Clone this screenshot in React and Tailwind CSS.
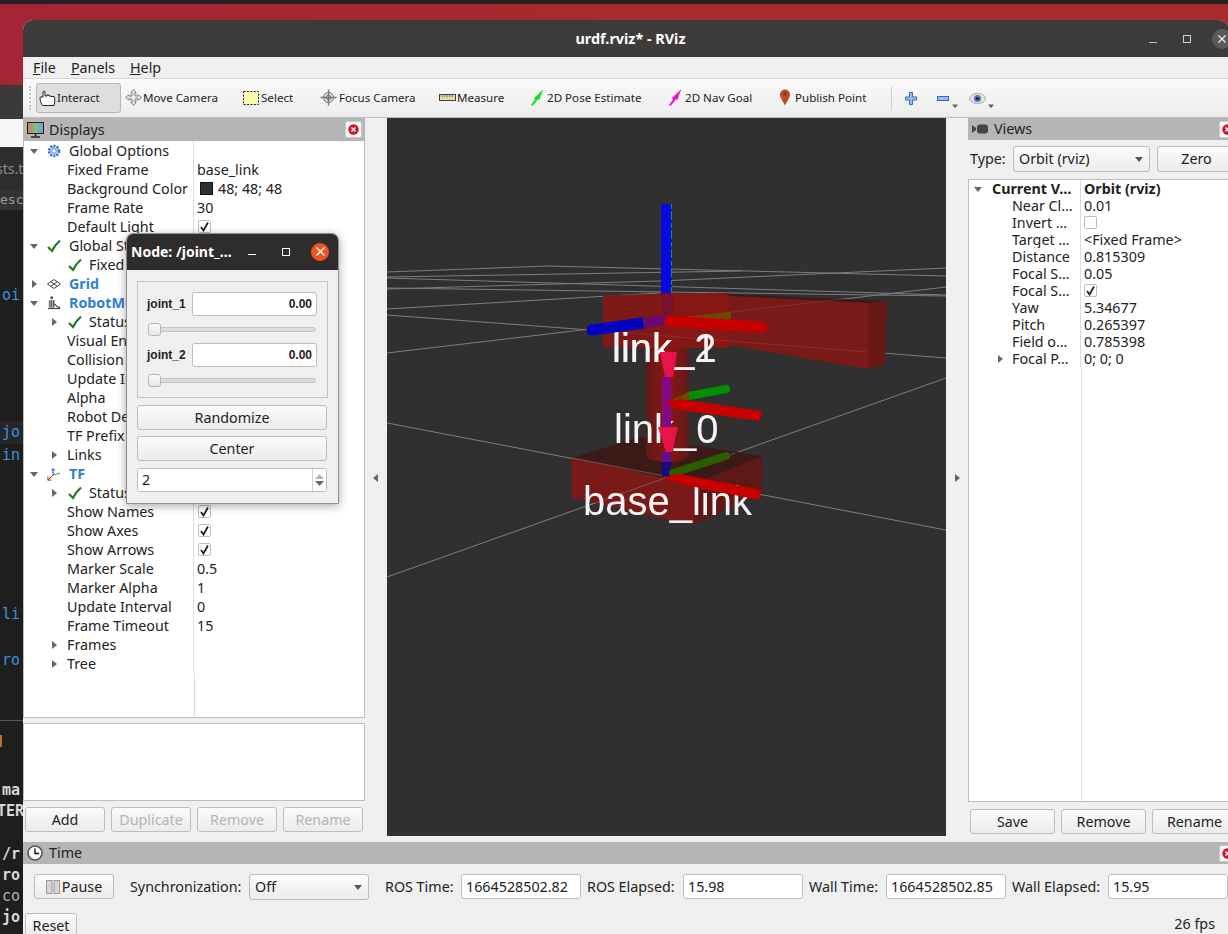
import React from "react";

const Tri = ({ dir = "down", className = "", color = "#666" }) => (
  <svg width="10" height="10" viewBox="0 0 10 10" className={className}>
    {dir === "down" ? <polygon points="1,3 9,3 5,8" fill={color} /> : <polygon points="3,1 8,5 3,9" fill={color} />}
  </svg>
);

const Check = () => (
  <svg width="14" height="14" viewBox="0 0 14 14">
    <path d="M1 8 L5 12 C7 8 9.5 4.5 13 1.5" fill="none" stroke="#1f7a22" strokeWidth="2.2" />
  </svg>
);

const CheckBox = ({ checked = true }) => (
  <div className="w-[13px] h-[13px] border border-[#bdbdbd] rounded-[2px] bg-white flex items-center justify-center">
    {checked && (
      <svg width="11" height="11" viewBox="0 0 11 11">
        <path d="M2 6 L4.5 9.5 L9 1.5" fill="none" stroke="#222" strokeWidth="1.8" />
      </svg>
    )}
  </div>
);

const CloseBtn = ({ className = "" }) => (
  <div className={`w-[17px] h-[17px] bg-[#f7f7f7] border border-[#c8c8c8] rounded-[2px] flex items-center justify-center shrink-0 ${className}`}>
    <svg width="11" height="11" viewBox="0 0 11 11">
      <circle cx="5.5" cy="5.5" r="5.2" fill="#c9182f" />
      <path d="M3.5 3.5 L7.5 7.5 M7.5 3.5 L3.5 7.5" stroke="#fff" strokeWidth="1.4" />
    </svg>
  </div>
);

const Btn = ({ children, className = "", disabled }) => (
  <div
    className={`h-[25px] shrink-0 border border-[#bdbdbd] rounded-[3px] bg-gradient-to-b from-[#fbfbfb] to-[#ebebeb] flex items-center justify-center ${disabled ? "text-[#b4b4b4]" : "text-[#222]"} ${className}`}
  >
    {children}
  </div>
);

const Field = ({ children, className = "" }) => (
  <div className={`h-[25px] shrink-0 border border-[#bdbdbd] rounded-[3px] bg-white flex items-center pl-[4px] text-[#222] ${className}`}>
    {children}
  </div>
);

const Combo = ({ children, className = "" }) => (
  <div className={`h-[26px] shrink-0 border border-[#bdbdbd] rounded-[3px] bg-gradient-to-b from-[#fbfbfb] to-[#ececec] flex items-center justify-between pl-[5px] pr-[5px] text-[#222] ${className}`}>
    {children}
    <Tri color="#555" />
  </div>
);

// small tree / toolbar icons
const GearIcon = () => (
  <svg width="14" height="14" viewBox="0 0 14 14">
    <circle cx="7" cy="7" r="5" fill="#c4d6f2" stroke="#3f74c9" strokeWidth="2.6" strokeDasharray="2 1.2" />
    <circle cx="7" cy="7" r="2.2" fill="#fff" stroke="#3f74c9" strokeWidth="0.8" />
  </svg>
);

const GridIcon = () => (
  <svg width="14" height="10" viewBox="0 0 14 10">
    <path d="M7 0.5 L13.5 5 L7 9.5 L0.5 5 Z M3.7 2.8 L10.3 7.2 M10.3 2.8 L3.7 7.2" fill="none" stroke="#333" strokeWidth="0.9" />
  </svg>
);

const RobotIcon = () => (
  <svg width="15" height="15" viewBox="0 0 15 15">
    <circle cx="5" cy="2.5" r="1.6" fill="#3b5a9a" />
    <rect x="2" y="5" width="6" height="8" fill="#555" />
    <path d="M3.5 5 V13 M6 5 V13" stroke="#ddd" strokeWidth="0.8" />
    <path d="M8 9 L11 12 L14 13" fill="none" stroke="#444" strokeWidth="1.2" />
    <path d="M1 14 H14" stroke="#222" strokeWidth="1" />
  </svg>
);

const TfIcon = () => (
  <svg width="16" height="16" viewBox="0 0 16 16">
    <path d="M7 9 L7 2 M5 4 L7 2 L9 4" fill="none" stroke="#2a2ac8" strokeWidth="1.1" />
    <path d="M7 9 L15 7" stroke="#1aa51a" strokeWidth="1.1" />
    <path d="M7 9 L1 15 M1 11 L1 15 L5 15" fill="none" stroke="#e01515" strokeWidth="1.1" />
  </svg>
);

const HandIcon = () => (
  <svg width="17" height="17" viewBox="0 0 17 17">
    <path d="M3 15 C1.5 12 0.8 9 1.2 7 H4 V2 C4 0.7 6 0.7 6 2 V6 H8 V5 H10 V6 H12 V6.5 H15 C16 8 16 12 15 15.5 H3.5 Z" fill="#fff" stroke="#222" strokeWidth="1" />
  </svg>
);

const MoveIcon = () => (
  <svg width="17" height="17" viewBox="0 0 17 17">
    <path d="M8.5 0.5 L11 3.5 H10 V7 H13.5 V6 L16.5 8.5 L13.5 11 V10 H10 V13.5 H11 L8.5 16.5 L6 13.5 H7 V10 H3.5 V11 L0.5 8.5 L3.5 6 V7 H7 V3.5 H6 Z" fill="#eee" stroke="#777" strokeWidth="0.9" />
    <path d="M5 5 H12 V12 H5 Z" fill="none" stroke="#aaa" strokeWidth="0.7" />
  </svg>
);

const SelectIcon = () => (
  <svg width="16" height="14" viewBox="0 0 16 14">
    <rect x="0.5" y="0.5" width="15" height="13" fill="#fdf6ad" stroke="#222" strokeWidth="1" strokeDasharray="2 1.4" />
  </svg>
);

const FocusIcon = () => (
  <svg width="17" height="17" viewBox="0 0 17 17">
    <circle cx="8.5" cy="8.5" r="5" fill="#ddd" stroke="#777" />
    <path d="M8.5 0.5 V16.5 M0.5 8.5 H16.5" stroke="#777" strokeWidth="1.4" />
    <circle cx="8.5" cy="8.5" r="2.2" fill="none" stroke="#777" />
  </svg>
);

const RulerIcon = () => (
  <svg width="17" height="8" viewBox="0 0 17 8">
    <rect x="0.5" y="0.5" width="16" height="6" fill="#e8dca0" stroke="#444" strokeWidth="1" />
    <path d="M3 1 V3 M5.5 1 V3 M8 1 V3.5 M10.5 1 V3 M13 1 V3" stroke="#444" strokeWidth="0.7" />
  </svg>
);

const ArrowIcon = ({ color }) => (
  <svg width="16" height="17" viewBox="0 0 16 20">
    <path d="M1 19 L6 12 L4.5 11 L15 1 L10.5 13 L9 12 L3 19.5 Z" fill={color} stroke={color} strokeWidth="0.4" />
  </svg>
);

const PinIcon = () => (
  <svg width="12" height="17" viewBox="0 0 12 17">
    <path d="M6 16.5 C4 12 1 9 1 5.5 A5 5 0 0 1 11 5.5 C11 9 8 12 6 16.5 Z" fill="#bd4b24" />
    <circle cx="6" cy="5" r="1.8" fill="#6e3a24" />
  </svg>
);

const PlusIcon = () => (
  <svg width="12" height="13" viewBox="0 0 12 13">
    <path d="M4.5 0.5 H7.5 V5 H11.5 V8 H7.5 V12.5 H4.5 V8 H0.5 V5 H4.5 Z" fill="#9cbce8" stroke="#3569b5" />
  </svg>
);

const MinusIcon = () => (
  <svg width="12" height="5" viewBox="0 0 12 5">
    <rect x="0.5" y="0.5" width="11" height="4" fill="#9cbce8" stroke="#3569b5" />
  </svg>
);

const EyeIcon = () => (
  <svg width="17" height="13" viewBox="0 0 17 13">
    <ellipse cx="8.5" cy="6.5" rx="8" ry="5" fill="#e4e4e8" stroke="#aaa" />
    <circle cx="8.5" cy="6.5" r="3.6" fill="#5f78b8" />
    <circle cx="8.5" cy="6.5" r="1.6" fill="#1d2540" />
  </svg>
);

const MonitorIcon = () => (
  <svg width="17" height="16" viewBox="0 0 17 16">
    <defs>
      <linearGradient id="screenGrad" x1="0" x2="1" y1="0" y2="0">
        <stop offset="0" stopColor="#d9706f" />
        <stop offset="0.5" stopColor="#7fc27f" />
        <stop offset="1" stopColor="#8b8fe6" />
      </linearGradient>
    </defs>
    <rect x="0.5" y="0.5" width="16" height="11" fill="url(#screenGrad)" stroke="#222" />
    <path d="M8.5 12 V14 M4 15 H13" stroke="#222" strokeWidth="1.6" />
  </svg>
);

const CameraIcon = () => (
  <svg width="16" height="10" viewBox="0 0 16 10">
    <polygon points="0,1 4,4 4,6 0,9" fill="#444" />
    <rect x="5" y="0.5" width="11" height="9" rx="3" fill="#444" />
  </svg>
);

const ClockIcon = () => (
  <svg width="16" height="16" viewBox="0 0 16 16">
    <circle cx="8" cy="8" r="7" fill="#fff" stroke="#555" strokeWidth="1.6" />
    <path d="M8 3.5 V8.5 H12" fill="none" stroke="#111" strokeWidth="1.4" />
  </svg>
);

const PauseIcon = () => (
  <svg width="14" height="14" viewBox="0 0 14 14">
    <rect x="0.5" y="0.5" width="5.5" height="13" fill="#d6d6ce" stroke="#999" />
    <rect x="8" y="0.5" width="5.5" height="13" fill="#d6d6ce" stroke="#999" />
  </svg>
);

const ICONS = { gear: <GearIcon />, grid: <GridIcon />, robot: <RobotIcon />, tf: <TfIcon />, check: <Check /> };

const displayRows = [
  { label: "Global Options", top: true, arrow: "down", icon: "gear" },
  { label: "Fixed Frame", value: "base_link" },
  { label: "Background Color", value: "48; 48; 48", swatch: true },
  { label: "Frame Rate", value: "30" },
  { label: "Default Light", box: true },
  { label: "Global Status: Ok", top: true, arrow: "down", icon: "check" },
  { label: "Fixed Frame", check: true },
  { label: "Grid", top: true, arrow: "right", icon: "grid", blue: true },
  { label: "RobotModel", top: true, arrow: "down", icon: "robot", blue: true },
  { label: "Status: Ok", arrow: "right", check: true },
  { label: "Visual Enabled" },
  { label: "Collision Enabled" },
  { label: "Update Interval" },
  { label: "Alpha" },
  { label: "Robot Description" },
  { label: "TF Prefix" },
  { label: "Links", arrow: "right" },
  { label: "TF", top: true, arrow: "down", icon: "tf", blue: true },
  { label: "Status: Ok", arrow: "right", check: true },
  { label: "Show Names", box: true },
  { label: "Show Axes", box: true },
  { label: "Show Arrows", box: true },
  { label: "Marker Scale", value: "0.5" },
  { label: "Marker Alpha", value: "1" },
  { label: "Update Interval", value: "0" },
  { label: "Frame Timeout", value: "15" },
  { label: "Frames", arrow: "right" },
  { label: "Tree", arrow: "right" },
];

const DisplayRow = ({ row }) => {
  const label = <span className={row.blue ? "font-bold text-[#2f7fd6]" : ""}>{row.label}</span>;
  let cell;
  if (row.top) {
    cell = (
      <div className="flex items-center pl-[4px]">
        <div className="w-[12px] flex justify-center"><Tri dir={row.arrow} /></div>
        <div className="ml-[7px] w-[14px] flex justify-center">{ICONS[row.icon]}</div>
        <div className="ml-[8px]">{label}</div>
      </div>
    );
  } else if (row.arrow) {
    cell = (
      <div className="flex items-center pl-[24px]">
        <div className="w-[12px] flex justify-center"><Tri dir={row.arrow} /></div>
        {row.check ? (
          <>
            <div className="ml-[8px] w-[14px]"><Check /></div>
            <div className="ml-[7px]">{label}</div>
          </>
        ) : (
          <div className="ml-[7px]">{label}</div>
        )}
      </div>
    );
  } else if (row.check) {
    cell = (
      <div className="flex items-center pl-[44px]">
        <div className="w-[14px]"><Check /></div>
        <div className="ml-[7px]">{label}</div>
      </div>
    );
  } else {
    cell = <div className="pl-[43px]">{label}</div>;
  }
  return (
    <div className="flex h-[19px] items-center leading-[19px]">
      <div className="w-[170px] h-full overflow-hidden whitespace-nowrap border-r border-[#dcdcdc] shrink-0 flex items-center">{cell}</div>
      <div className="pl-[3px] flex items-center">
        {row.swatch && <div className="w-[13px] h-[13px] bg-[#303030] border border-[#111] mr-[5px] ml-[3px]" />}
        {row.box ? <div className="ml-[1px]"><CheckBox /></div> : row.value}
      </div>
    </div>
  );
};

const viewRows = [
  { label: "Current V…", value: "Orbit (rviz)", bold: true, arrow: "down" },
  { label: "Near Cl…", value: "0.01" },
  { label: "Invert …", box: "off" },
  { label: "Target …", value: "<Fixed Frame>" },
  { label: "Distance", value: "0.815309" },
  { label: "Focal S…", value: "0.05" },
  { label: "Focal S…", box: "on" },
  { label: "Yaw", value: "5.34677" },
  { label: "Pitch", value: "0.265397" },
  { label: "Field o…", value: "0.785398" },
  { label: "Focal P…", value: "0; 0; 0", arrow: "right" },
];

const ViewRow = ({ row }) => (
  <div className={`flex h-[17px] items-center leading-[17px] ${row.bold ? "font-bold" : ""}`}>
    <div className="w-[112px] h-full shrink-0 overflow-hidden whitespace-nowrap border-r border-[#dcdcdc] flex items-center">
      {row.bold ? (
        <div className="flex items-center pl-[4px]">
          <Tri dir="down" />
          <span className="ml-[9px]">{row.label}</span>
        </div>
      ) : row.arrow ? (
        <div className="flex items-center pl-[26px]">
          <Tri dir="right" />
          <span className="ml-[7px]">{row.label}</span>
        </div>
      ) : (
        <span className="pl-[43px]">{row.label}</span>
      )}
    </div>
    <div className="pl-[3px] flex items-center">
      {row.box ? <CheckBox checked={row.box === "on"} /> : row.value}
    </div>
  </div>
);

const tools = [
  { label: "Interact", icon: <HandIcon />, wrap: "w-[85px] ml-[3px] pl-[2px] h-[30px] bg-[#dedede] border border-[#b5b5b5] rounded-[3px]", gap: "ml-[1px]" },
  { label: "Move Camera", icon: <MoveIcon />, wrap: "w-[118px] pl-[4px]", gap: "ml-[1px]" },
  { label: "Select", icon: <SelectIcon />, wrap: "w-[81px] pl-[4px]", gap: "ml-[2px]" },
  { label: "Focus Camera", icon: <FocusIcon />, wrap: "w-[119px]", gap: "ml-[2px]" },
  { label: "Measure", icon: <RulerIcon />, wrap: "w-[90px]", gap: "ml-[1px]" },
  { label: "2D Pose Estimate", icon: <ArrowIcon color="#19e02a" />, wrap: "w-[138px]", gap: "ml-[2px]" },
  { label: "2D Nav Goal", icon: <ArrowIcon color="#f012c8" />, wrap: "w-[112px]", gap: "ml-[2px]" },
  { label: "Publish Point", icon: <PinIcon />, wrap: "w-[113px]", gap: "ml-[4px]" },
];

const Scene = () => (
  <svg viewBox="387 118 559 718" width="559" height="718" className="block">
    <defs>
      <linearGradient id="cyl" x1="0" x2="1" y1="0" y2="0">
        <stop offset="0" stopColor="#5e1a18" />
        <stop offset="0.5" stopColor="#8f1512" />
        <stop offset="1" stopColor="#5e1a18" />
      </linearGradient>
      <filter id="soft" x="-5%" y="-5%" width="110%" height="110%">
        <feGaussianBlur stdDeviation="0.45" />
      </filter>
    </defs>
    <g stroke="#8c8c8c" strokeWidth="1" fill="none" opacity="0.85">
      <path d="M387 272 L548 266 L946 276" />
      <path d="M387 277 L741 271" />
      <path d="M387 278 L946 295" />
      <path d="M387 289 L660 281 L946 268" />
      <path d="M387 288 L946 296" />
      <path d="M387 309 L660 293" />
      <path d="M387 353 L946 287" />
      <path d="M387 315 L590 330 L946 358" />
      <path d="M387 423 L946 530" />
      <path d="M387 577 L946 378" />
    </g>
    {/* base box */}
    <polygon points="572,458 640,437 762,456 694,484" fill="#3b1a17" />
    <polygon points="572,458 694,484 694,525 572,498" fill="#7a1a18" />
    <polygon points="694,484 762,456 762,493 694,525" fill="#5f1816" />
    <path d="M572 458 L665 476 M590 505 L665 478 L735 453" stroke="#8c8c8c" strokeWidth="1" opacity="0.5" fill="none" />
    {/* cylinder */}
    <path d="M646 345 V455 A21.5 7 0 0 0 689 455 V345 Z" fill="url(#cyl)" />
    {/* arm */}
    <polygon points="729,294 887,301 868,303 729,296" fill="#3d1a17" />
    <polygon points="729,296 868,303 868,369 729,345" fill="#7a1a18" />
    <polygon points="868,303 887,301 885,364 868,369" fill="#6a1816" />
    <polygon points="603,295 729,293 729,348 603,347" fill="#7d1a18" />
    <rect x="657" y="293" width="72" height="55" fill="#8a1512" opacity="0.6" />
    <path d="M604 327 L868 296 M604 331 L868 352" stroke="#a05a58" strokeWidth="1" opacity="0.35" fill="none" />
    {/* labels */}
    <g fill="#f4f4f4" fontFamily="'Liberation Sans', sans-serif" fontSize="40" filter="url(#soft)">
      <text x="612" y="362">link_1</text>
      <text x="612" y="362">link_2</text>
      <text x="614" y="443">link_0</text>
      <text x="583" y="515">base_link</text>
    </g>
    {/* vertical axis */}
    <rect x="661" y="204" width="11" height="89" fill="#0808e0" />
    <path d="M671.5 204 V293" stroke="#0c9a3a" strokeWidth="1" strokeDasharray="5 2 9 3" />
    <rect x="662" y="293" width="11" height="28" fill="#7a1030" />
    <rect x="662" y="377" width="9" height="50" fill="#7e0a86" />
    <rect x="662" y="452" width="9" height="10" fill="#60108a" />
    <rect x="662" y="462" width="9" height="14" fill="#1a0a80" />
    {/* upper frame */}
    <polygon points="673,318 731,312 731,319 673,325" fill="#6b4a00" />
    <line x1="592" y1="330" x2="643" y2="323" stroke="#0000c0" strokeWidth="11" strokeLinecap="round" />
    <line x1="643" y1="323" x2="664" y2="320" stroke="#6a0a70" strokeWidth="10" />
    <line x1="670" y1="321" x2="762" y2="327" stroke="#c80000" strokeWidth="11" strokeLinecap="round" />
    <polygon points="660,352 677,352 673,377 665,377" fill="#e8134a" />
    {/* middle frame */}
    <line x1="689" y1="396" x2="726" y2="389" stroke="#009000" strokeWidth="8" strokeLinecap="round" />
    <polygon points="673,399 689,392 689,400 673,403" fill="#6b4a00" />
    <polygon points="664,403 680,399 762,411 760,421 680,410" fill="#c80000" />
    <polygon points="658,427 678,427 672,452 666,452" fill="#e8134a" />
    {/* bottom frame */}
    <line x1="673" y1="473" x2="726" y2="456" stroke="#2c5c00" strokeWidth="8" strokeLinecap="round" />
    <polygon points="664,477 680,474 761,490 759,500 680,484" fill="#c80000" />
  </svg>
);

export default function App() {
  return (
    <div className="relative w-[1228px] h-[934px] overflow-hidden bg-[#1e1e1e] font-['Noto_Sans',sans-serif] text-[14.3px] text-[#222]">
      {/* desktop behind the window */}
      <div className="h-[4px] bg-[#222]" />
      <div className="h-[81px] bg-gradient-to-r from-[#a52537] via-[#a82a2a] to-[#a82a2a]" />
      <div className="w-[23px] overflow-hidden whitespace-nowrap font-['DejaVu_Sans_Mono',monospace] text-[15px]">
        <div className="h-[34px] bg-[#3b3a38]" />
        <div className="h-[28px] bg-[#f6f6f6]" />
        <div className="h-[43px] bg-[#2e2e2e] text-[#8d8d8d] flex items-center -ml-[4px] pl-[0px] font-['Noto_Sans',sans-serif] text-[14px]">sts.t</div>
        <div className="h-[20px] bg-[#333] text-[#999] flex items-center text-[13px]">esc</div>
        <div className="h-[74px]" />
        <div className="h-[23px] pl-[2px] text-[#3f8fdc] leading-[23px]">oi</div>
        <div className="h-[114px]" />
        <div className="h-[23px] pl-[2px] text-[#3f8fdc] leading-[23px] bg-[#262626]">jo</div>
        <div className="h-[23px] pl-[2px] text-[#3f8fdc] leading-[23px]">in</div>
        <div className="h-[136px]" />
        <div className="h-[23px] pl-[2px] text-[#3f8fdc] leading-[23px]">li</div>
        <div className="h-[23px]" />
        <div className="h-[23px] pl-[2px] text-[#3f8fdc] leading-[23px]">ro</div>
        <div className="h-[48px]" />
        <div className="h-[1px] bg-[#555]" />
        <div className="h-[14px]" />
        <div className="h-[12px] w-[2px] bg-[#b5702a]" />
        <div className="h-[33px]" />
        <div className="h-[21px] pl-[2px] leading-[21px] font-bold text-[#d8d8d8]">ma</div>
        <div className="h-[21px] -ml-[3px] leading-[21px] font-bold text-[#d8d8d8]">TER</div>
        <div className="h-[22px]" />
        <div className="h-[21px] pl-[2px] leading-[21px] font-bold text-[#d8d8d8]">/r</div>
        <div className="h-[21px] pl-[2px] leading-[21px] font-bold text-[#d8d8d8]">ro</div>
        <div className="h-[21px] pl-[2px] leading-[21px] text-[#b0b0b0]">co</div>
        <div className="h-[21px] pl-[2px] leading-[21px] font-bold text-[#d8d8d8]">jo</div>
      </div>

      {/* RViz window */}
      <div className="absolute left-[23px] top-[20px] w-[1206px] h-[930px] overflow-hidden rounded-t-[10px] bg-[#efefef] flex flex-col">
        <div className="h-[37px] shrink-0 bg-[#3d3c3a] grid grid-cols-3 items-center text-white">
          <div />
          <div className="text-center font-bold text-[14.4px] pl-[9px]">urdf.rviz* - RViz</div>
          <div className="flex items-center justify-end gap-[21px] -mr-[3px]">
            <div className="w-[8px] h-[1px] bg-[#bbb] mt-[8px] mr-[5px]" />
            <div className="w-[8px] h-[8px] border border-[#ccc]" />
            <div className="w-[20px] h-[20px] rounded-full bg-[#5b5a58] flex items-center justify-center">
              <svg width="8" height="8" viewBox="0 0 8 8"><path d="M0.5 0.5 L7.5 7.5 M7.5 0.5 L0.5 7.5" stroke="#eee" strokeWidth="1.2" /></svg>
            </div>
          </div>
        </div>

        <div className="h-[21px] shrink-0 flex items-center pl-[10px] gap-[15px] bg-[#efefef]">
          <span><u>F</u>ile</span>
          <span><u>P</u>anels</span>
          <span><u>H</u>elp</span>
        </div>

        <div className="h-[40px] shrink-0 border-t border-[#d8d8d8] border-b border-b-[#bcbcbc] bg-gradient-to-b from-[#fafafa] to-[#ececec] flex items-center text-[11.6px] pl-[6px]">
          <div className="w-[4px] h-[24px] border-l-2 border-dotted border-[#c4c4c4] shrink-0" />
          {tools.map((t) => (
            <div key={t.label} className={`flex items-center shrink-0 ${t.wrap}`}>
              {t.icon}
              <span className={t.gap}>{t.label}</span>
            </div>
          ))}
          <div className="w-[1px] h-[24px] bg-[#d0d0d0] ml-[-1px] mr-[13px] shrink-0" />
          <PlusIcon />
          <div className="ml-[20px]"><MinusIcon /></div>
          <Tri color="#666" className="mt-[16px] ml-[1px] scale-75" />
          <div className="ml-[9px]"><EyeIcon /></div>
          <Tri color="#666" className="mt-[16px] scale-75" />
        </div>

        <div className="flex h-[724px] shrink-0">
          {/* Displays */}
          <div className="w-[342px] shrink-0 flex flex-col">
            <div className="h-[23px] bg-[#b5b5b5] flex items-center pl-[4px] pr-[3px]">
              <MonitorIcon />
              <span className="ml-[5px] flex-1">Displays</span>
              <CloseBtn />
            </div>
            <div className="h-[577px] bg-white border-x border-b border-[#bdbdbd]">
              {displayRows.map((r, i) => <DisplayRow key={i} row={r} />)}
              <div className="h-[45px] w-[171px] border-r border-[#dcdcdc]" />
            </div>
            <div className="h-[78px] mt-[5px] bg-white border border-[#bdbdbd]" />
            <div className="flex gap-[6px] mt-[6px] pl-[2px]">
              <Btn className="w-[80px]">Add</Btn>
              <Btn className="w-[80px]" disabled>Duplicate</Btn>
              <Btn className="w-[80px]" disabled>Remove</Btn>
              <Btn className="w-[80px]" disabled>Rename</Btn>
            </div>
          </div>

          <div className="w-[22px] shrink-0 flex items-center justify-center pb-[5px]">
            <Tri dir="right" color="#666" className="rotate-180" />
          </div>

          <div className="w-[559px] h-[718px] shrink-0 bg-[#303030] overflow-hidden">
            <Scene />
          </div>

          <div className="w-[22px] shrink-0 flex items-center justify-center pb-[5px]">
            <Tri dir="right" color="#666" />
          </div>

          {/* Views */}
          <div className="w-[261px] shrink-0 flex flex-col">
            <div className="h-[22px] bg-[#b5b5b5] flex items-center pl-[4px]">
              <CameraIcon />
              <span className="ml-[6px] flex-1">Views</span>
              <CloseBtn className="-mr-[7px]" />
            </div>
            <div className="flex items-center h-[26px] mt-[6px] pl-[2px]">
              <span className="w-[43px] shrink-0 pb-[1px]">Type:</span>
              <Combo className="w-[137px] pb-[1px]">Orbit (rviz)</Combo>
              <Btn className="w-[79px] ml-[7px] h-[26px] pb-[1px]">Zero</Btn>
            </div>
            <div className="h-[623px] mt-[7px] bg-white border border-[#bdbdbd]">
              {viewRows.map((r, i) => <ViewRow key={i} row={r} />)}
              <div className="h-[435px] w-[113px] border-r border-[#dcdcdc]" />
            </div>
            <div className="flex gap-[6px] mt-[7px] pl-[2px]">
              <Btn className="w-[85px]">Save</Btn>
              <Btn className="w-[85px]">Remove</Btn>
              <Btn className="w-[85px]">Rename</Btn>
            </div>
          </div>
        </div>

        {/* Time */}
        <div className="h-[22px] shrink-0 bg-[#b5b5b5] flex items-center pl-[4px]">
          <ClockIcon />
          <span className="ml-[6px] flex-1">Time</span>
          <CloseBtn className="-mr-[7px]" />
        </div>
        <div className="flex items-center h-[25px] mt-[10px] pl-[11px]">
          <Btn className="w-[80px] gap-[2px]"><PauseIcon />Pause</Btn>
          <span className="ml-[16px] w-[119px] shrink-0">Synchronization:</span>
          <Combo className="w-[120px] h-[25px]">Off</Combo>
          <span className="ml-[16px] w-[76px] shrink-0">ROS Time:</span>
          <Field className="w-[120px]">1664528502.82</Field>
          <span className="ml-[6px] w-[96px] shrink-0">ROS Elapsed:</span>
          <Field className="w-[120px]">15.98</Field>
          <span className="ml-[6px] w-[77px] shrink-0">Wall Time:</span>
          <Field className="w-[120px]">1664528502.85</Field>
          <span className="ml-[6px] w-[96px] shrink-0">Wall Elapsed:</span>
          <Field className="w-[120px]">15.95</Field>
        </div>
        <div className="flex items-end justify-between pl-[2px] pr-[14px] mt-[14px] h-[25px]">
          <Btn className="w-[52px]">Reset</Btn>
          <span className="mb-[4px]">26 fps</span>
        </div>
      </div>

      {/* joint state publisher window */}
      <div className="absolute left-[126px] top-[233px] w-[213px] h-[271px] rounded-t-[7px] overflow-hidden bg-[#efefef] border border-[#8f8f8f] shadow-[0_2px_10px_rgba(0,0,0,0.35)] flex flex-col">
        <div className="h-[36px] shrink-0 bg-[#2f2d2c] flex items-center pl-[4px] pb-[1px] text-white font-bold text-[14px]">
          <span className="w-[112px] whitespace-nowrap overflow-hidden">Node: /joint_…</span>
          <div className="w-[8px] h-[1px] bg-white ml-[5px] mt-[6px]" />
          <div className="w-[8px] h-[8px] border border-white ml-[26px]" />
          <div className="w-[18px] h-[18px] rounded-full bg-[#e95420] ml-[21px] flex items-center justify-center">
            <svg width="9" height="9" viewBox="0 0 9 9"><path d="M0.5 0.5 L8.5 8.5 M8.5 0.5 L0.5 8.5" stroke="#fff" strokeWidth="1.4" /></svg>
          </div>
        </div>
        <div className="px-[10px] pt-[11px]">
          <div className="h-[117px] border border-[#c4c4c4] pl-[9px] pr-[9px] pt-[10px]">
            {["joint_1", "joint_2"].map((j, i) => (
              <div key={j} className={i ? "mt-[7px]" : ""}>
                <div className="flex items-center h-[24px]">
                  <span className="w-[45px] shrink-0 font-bold text-[12px] font-['Liberation_Sans',sans-serif]">{j}</span>
                  <div className="w-[125px] h-[24px] bg-white border border-[#bdbdbd] rounded-[3px] flex items-center justify-end pr-[4px] font-bold text-[12px] font-['Liberation_Sans',sans-serif]">0.00</div>
                </div>
                <div className="relative mt-[7px] h-[13px] ml-[1px] w-[168px] flex items-center">
                  <div className="w-full h-[5px] rounded-full bg-[#dcdcdc] border border-[#c4c4c4]" />
                  <div className="absolute left-0 top-0 w-[13px] h-[13px] rounded-[3px] border border-[#b5b5b5] bg-gradient-to-b from-[#fafafa] to-[#e6e6e6]" />
                </div>
              </div>
            ))}
          </div>
          <Btn className="w-[190px] mt-[7px]">Randomize</Btn>
          <Btn className="w-[190px] mt-[6px]">Center</Btn>
          <div className="w-[190px] h-[24px] mt-[7px] bg-white border border-[#bdbdbd] rounded-[3px] flex items-center pl-[4px] justify-between">
            <span>2</span>
            <div className="w-[14px] h-full border-l border-[#d4d4d4] flex flex-col items-center justify-center gap-[2px]">
              <svg width="9" height="5" viewBox="0 0 9 5"><polygon points="4.5,0 9,5 0,5" fill="#b5b5b5" /></svg>
              <svg width="9" height="5" viewBox="0 0 9 5"><polygon points="0,0 9,0 4.5,5" fill="#666" /></svg>
            </div>
          </div>
        </div>
      </div>
    </div>
  );
}
